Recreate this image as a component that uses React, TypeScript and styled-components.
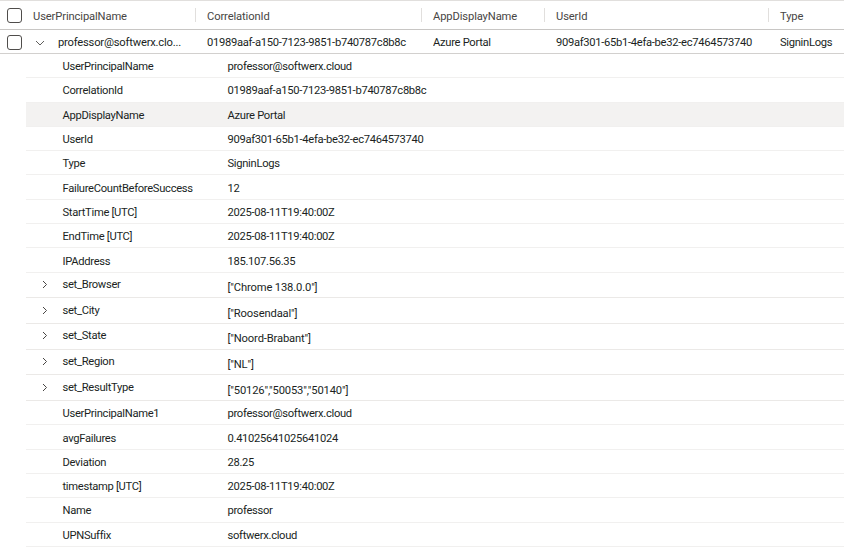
import React from "react";
import styled, { createGlobalStyle } from "styled-components";

const Global = createGlobalStyle`
  html, body { margin: 0; padding: 0; background: #fff; overflow: hidden; }
  #root { width: 844px; height: 548px; overflow: hidden; }
`;

const Page = styled.div`
  width: 844px;
  height: 548px;
  font-family: Roboto, "Noto Sans", sans-serif;
  font-size: 11.2px;
  letter-spacing: -0.3px;
  color: #323130;
  display: flex;
  flex-direction: column;
  border-top: 1px solid #e1dfdd;
  box-sizing: border-box;
  overflow: hidden;
`;

const columns = "33px 174px 226px 123px 224px 64px";

const HeaderRow = styled.div`
  display: grid;
  grid-template-columns: ${columns};
  height: 28px;
  flex: none;
  align-items: center;
  border-bottom: 1px solid #c8c6c4;
  color: #484644;
  letter-spacing: -0.12px;
`;

const HeaderCell = styled.div<{ $divider?: boolean }>`
  height: 14px;
  line-height: 16px;
  padding-top: 1px;
  white-space: nowrap;
  border-right: ${(p) => (p.$divider ? "1px solid #e1dfdd" : "none")};
  margin-right: ${(p) => (p.$divider ? "11px" : "0")};
  box-sizing: border-box;
`;

const CheckCell = styled.div<{ $low?: boolean }>`
  display: flex;
  padding-left: 7px;
  margin-top: ${(p) => (p.$low ? "2px" : "0")};
`;

const Check = styled.span`
  display: block;
  width: 13px;
  height: 13px;
  border: 1px solid #4f4d4b;
  border-radius: 3px;
`;

const DataRow = styled.div`
  display: grid;
  grid-template-columns: ${columns};
  height: 24px;
  flex: none;
  align-items: center;
  border-bottom: 1px solid #d2d0ce;
  color: #201f1e;
  box-sizing: border-box;
`;

const NameCell = styled.div`
  display: flex;
  align-items: center;
  white-space: nowrap;
  margin-top: 2px;
  letter-spacing: -0.2px;
`;

const Cell = styled.div`
  white-space: nowrap;
  overflow: hidden;
  margin-top: 2px;
`;

const Chevron = styled.svg`
  flex: none;
  display: block;
`;

const DownChevron = styled(Chevron)`
  margin: 0 13px 0 2px;
`;

const Details = styled.div`
  margin-left: 26px;
  display: flex;
  flex-direction: column;
`;

const Detail = styled.div<{ $tall?: boolean; $active?: boolean }>`
  display: grid;
  grid-template-columns: 36.5px 165px 1fr;
  height: ${(p) => (p.$tall ? "25.7px" : "24.3px")};
  flex: none;
  box-sizing: border-box;
  align-items: center;
  border-bottom: 1px solid ${(p) => (p.$tall ? "#ebe9e7" : "#f1f0ef")};
  background: ${(p) => (p.$active ? "#f3f2f1" : "transparent")};
  color: #201f1e;
  white-space: nowrap;
`;

const Toggle = styled.div`
  display: flex;
  padding-left: 16px;
  margin-top: -1px;
`;

const Key = styled.div<{ $tall?: boolean }>`
  margin-top: ${(p) => (p.$tall ? "-1px" : "2px")};
`;

const Value = styled.div<{ $tall?: boolean }>`
  margin-top: ${(p) => (p.$tall ? "5px" : "2px")};
  letter-spacing: ${(p) => (p.$tall ? "-0.14px" : "-0.3px")};
`;

const rows: [string, string, boolean?][] = [
  ["UserPrincipalName", "professor@softwerx.cloud"],
  ["CorrelationId", "01989aaf-a150-7123-9851-b740787c8b8c"],
  ["AppDisplayName", "Azure Portal"],
  ["UserId", "909af301-65b1-4efa-be32-ec7464573740"],
  ["Type", "SigninLogs"],
  ["FailureCountBeforeSuccess", "12"],
  ["StartTime [UTC]", "2025-08-11T19:40:00Z"],
  ["EndTime [UTC]", "2025-08-11T19:40:00Z"],
  ["IPAddress", "185.107.56.35"],
  ["set_Browser", '["Chrome 138.0.0"]', true],
  ["set_City", '["Roosendaal"]', true],
  ["set_State", '["Noord-Brabant"]', true],
  ["set_Region", '["NL"]', true],
  ["set_ResultType", '["50126","50053","50140"]', true],
  ["UserPrincipalName1", "professor@softwerx.cloud"],
  ["avgFailures", "0.41025641025641024"],
  ["Deviation", "28.25"],
  ["timestamp [UTC]", "2025-08-11T19:40:00Z"],
  ["Name", "professor"],
  ["UPNSuffix", "softwerx.cloud"],
];

const Down = () => (
  <DownChevron width="10" height="10" viewBox="0 0 10 10">
    <path d="M1 3l4 4 4-4" fill="none" stroke="#605e5c" strokeWidth="1" />
  </DownChevron>
);

const Right = () => (
  <Chevron width="6" height="9" viewBox="0 0 6 9">
    <path d="M1 1l3.5 3.5L1 8" fill="none" stroke="#484644" strokeWidth="1" />
  </Chevron>
);

export default function App() {
  return (
    <Page>
      <Global />
      <HeaderRow>
        <CheckCell><Check /></CheckCell>
        <HeaderCell $divider>UserPrincipalName</HeaderCell>
        <HeaderCell $divider>CorrelationId</HeaderCell>
        <HeaderCell $divider>AppDisplayName</HeaderCell>
        <HeaderCell $divider>UserId</HeaderCell>
        <HeaderCell>Type</HeaderCell>
      </HeaderRow>
      <DataRow>
        <CheckCell $low><Check /></CheckCell>
        <NameCell><Down />professor@softwerx.clo...</NameCell>
        <Cell>01989aaf-a150-7123-9851-b740787c8b8c</Cell>
        <Cell>Azure Portal</Cell>
        <Cell>909af301-65b1-4efa-be32-ec7464573740</Cell>
        <Cell>SigninLogs</Cell>
      </DataRow>
      <Details>
        {rows.map(([k, v, tall]) => (
          <Detail key={k} $tall={tall} $active={k === "AppDisplayName"}>
            <Toggle>{tall ? <Right /> : null}</Toggle>
            <Key $tall={tall}>{k}</Key>
            <Value $tall={tall}>{v}</Value>
          </Detail>
        ))}
      </Details>
    </Page>
  );
}
